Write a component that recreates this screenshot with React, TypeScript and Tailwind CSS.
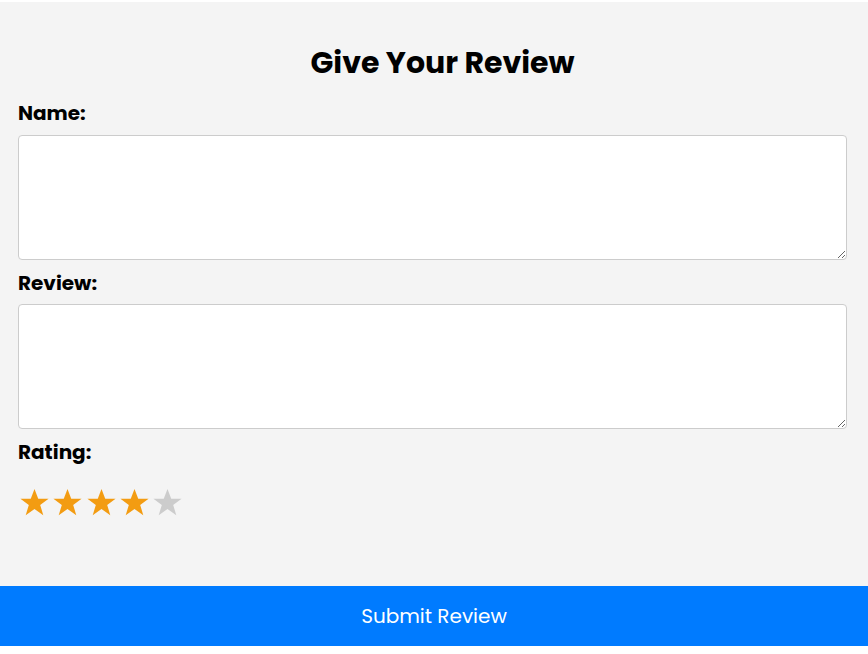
import React, { useState } from 'react';

const Star = ({ filled }: { filled: boolean }) => (
  <svg viewBox="0 0 24 24" className="h-[31px] w-[31px]" aria-hidden="true">
    <polygon
      points="12,1.5 14.9,9 22.9,9 16.4,13.9 18.8,21.8 12,17 5.2,21.8 7.6,13.9 1.1,9 9.1,9"
      fill={filled ? '#f39c12' : '#cccccc'}
    />
  </svg>
);

export default function App() {
  const [rating, setRating] = useState(4);

  return (
    <div className="min-h-[654px] bg-white pt-[2px] font-['Poppins','Open_Sans',sans-serif]">
      <div className="bg-[#f4f4f4]">
        <div className="pl-[18px] pr-[21px] pt-[38px]">
          <h2 className="mb-[13px] pl-[20px] text-center text-[30px] font-bold leading-[45px] text-black">
            Give Your Review
          </h2>

          <label className="mb-[7px] block text-[20px] font-bold leading-[30px] text-black">Name:</label>
          <textarea className="block h-[125px] w-full rounded-[4px] border border-[#cccccc] bg-white p-2" />

          <label className="mb-[6px] mt-[8px] block text-[20px] font-bold leading-[30px] text-black">Review:</label>
          <textarea className="block h-[125px] w-full rounded-[4px] border border-[#cccccc] bg-white p-2" />

          <label className="mt-[8px] block text-[20px] font-bold leading-[30px] text-black">Rating:</label>
          <div className="ml-[1px] mt-[20px] flex gap-[2.3px] pb-[68px]">
            {[1, 2, 3, 4, 5].map(n => (
              <button key={n} type="button" onClick={() => setRating(n)} className="cursor-pointer">
                <Star filled={n <= rating} />
              </button>
            ))}
          </div>
        </div>

        <button
          type="button"
          className="block h-[60px] w-full bg-[#007bff] text-center text-[20px] font-normal text-white"
        >
          Submit Review
        </button>
      </div>
    </div>
  );
}
